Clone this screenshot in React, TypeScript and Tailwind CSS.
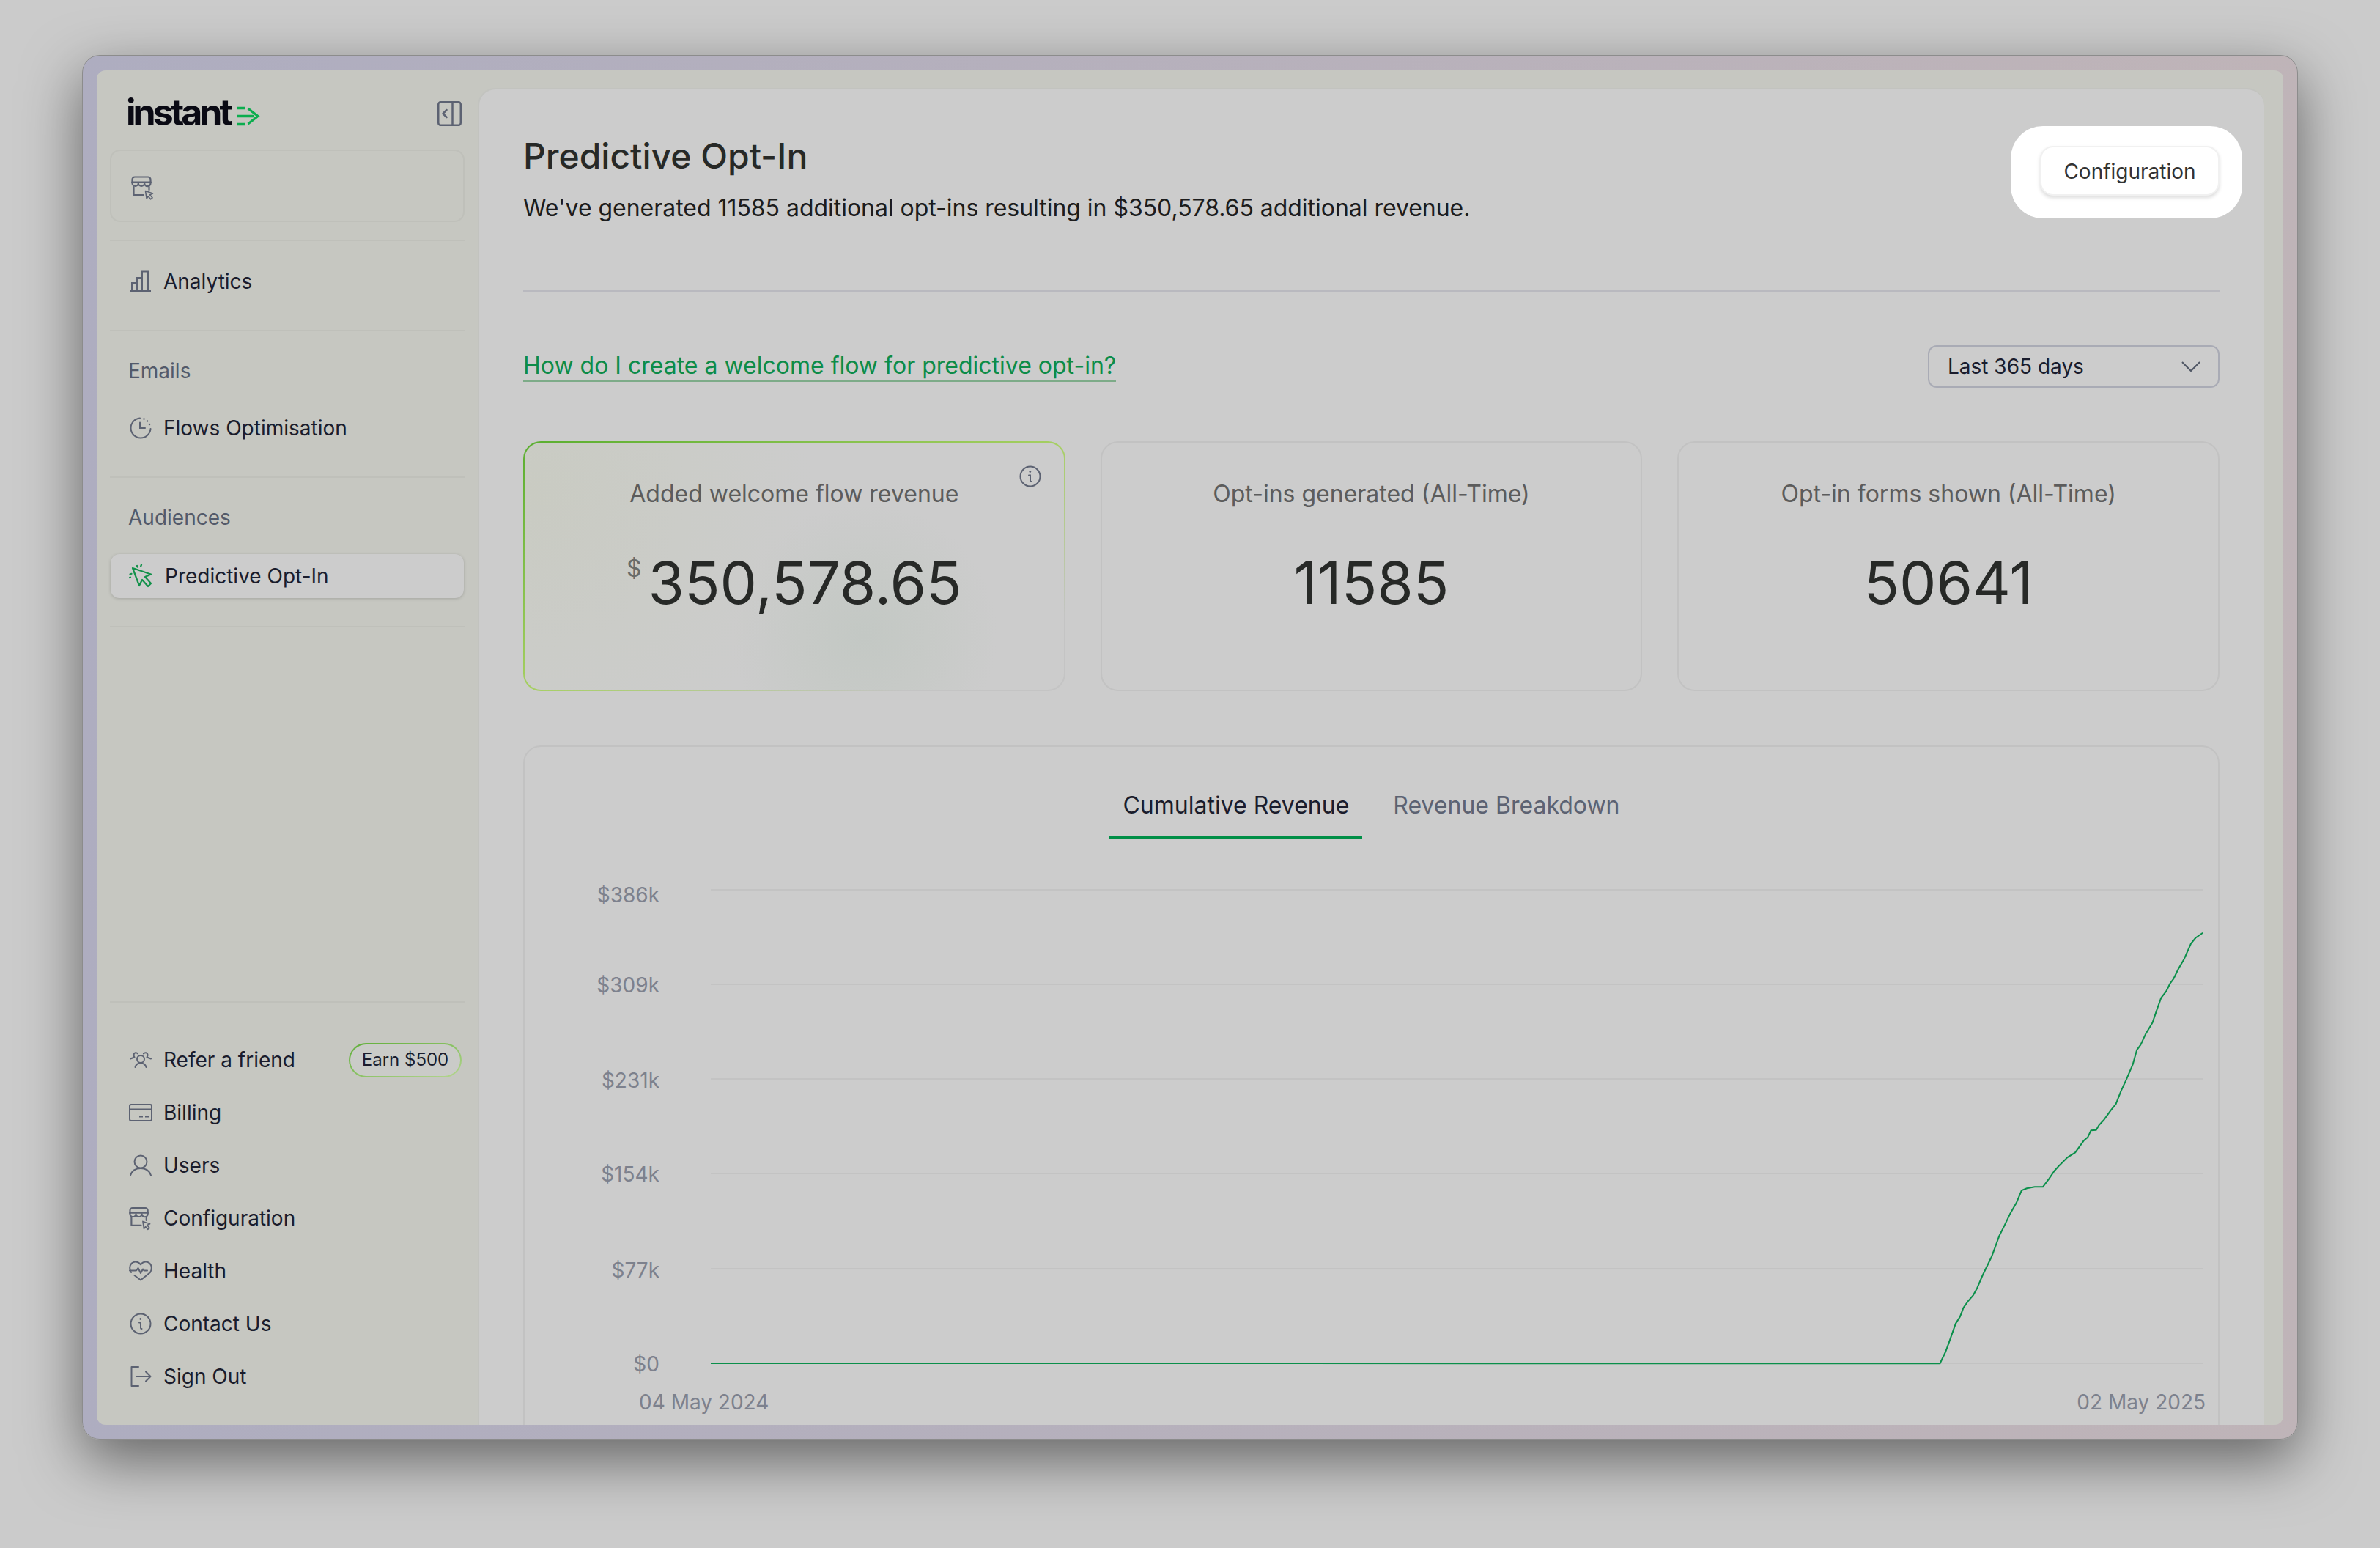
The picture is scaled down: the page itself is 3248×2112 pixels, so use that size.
import React from 'react';

const inter = { fontFamily: 'Inter, "Noto Sans", sans-serif' };

const StoreIcon = () => (
  <svg width="33" height="33" viewBox="0 0 33 33" fill="none" stroke="#5c6272" strokeWidth="2.200" strokeLinecap="round" strokeLinejoin="round">
    <path d="M1.500 9V5A3.500 3.500 0 0 1 5 1.500h18A3.500 3.500 0 0 1 26.500 5V9" />
    <path d="M1.500 8.500h25" />
    <path d="M1.500 8.500V10a4.170 4.170 0 0 0 8.330 0a4.170 4.170 0 0 0 8.330 0a4.170 4.170 0 0 0 8.340 0V8.500" />
    <path d="M3.500 15v11h13.500M24.500 15v4" />
    <path d="M19.500 20.500l10 3.500-4 1.800 3.500 4-2.500 2-3.200-4-2.200 3.200z" strokeWidth="1.600" />
  </svg>
);

const BarsIcon = () => (
  <svg width="30" height="30" viewBox="0 0 30 30" fill="none" stroke="#5c6272" strokeWidth="2">
    <path d="M1 28h28M3 28V17h7v11M10 28V10h7v18M17 28V1.500h8V28" />
  </svg>
);

const ClockIcon = () => (
  <svg width="32" height="32" viewBox="0 0 32 32" fill="none" stroke="#5c6272" strokeWidth="2" strokeLinecap="round">
    <path d="M15 2.500A13.500 13.500 0 1 0 29.500 17" />
    <path d="M15 8.500V16h7" />
    <path d="M20.500 3.500v.1M25 6.500v.1M28 11v.1" strokeWidth="2.500" />
  </svg>
);

const ClickIcon = () => (
  <svg width="32" height="34" viewBox="0 0 32 34" fill="none" stroke="#12914a" strokeWidth="2.200" strokeLinecap="round" strokeLinejoin="round">
    <path d="M5 6l25 8.500-8 3.500 8 9-4 4-8-9-4 8z" />
    <path d="M11 3l.6 1.500M17 1.500l-.8 2M1.500 14.500l2-.7M1 19l1-.4" />
  </svg>
);

const FriendsIcon = () => (
  <svg width="30" height="24" viewBox="0 0 30 24" fill="none" stroke="#5c6272" strokeWidth="2" strokeLinecap="round" strokeLinejoin="round">
    <circle cx="15" cy="11" r="5" />
    <path d="M7.500 22c1-4 4-5.500 7.500-5.500s6.500 1.500 7.500 5.500" />
    <path d="M11 3.500C9.500 1.500 6 1.500 5.500 5c-.2 1.500.5 2.500 1 3.500L1 10.500" />
    <path d="M19 3.500c1.500-2 5-2 5.500 1.500.2 1.500-.5 2.500-1 3.500l5.500 2" />
  </svg>
);

const CardIcon = () => (
  <svg width="32" height="24" viewBox="0 0 32 24" fill="none" stroke="#5c6272" strokeWidth="2">
    <rect x="1" y="1" width="30" height="22" rx="2" />
    <path d="M1 7.500h30M14 17.500h5M22 17.500h5" />
  </svg>
);

const UserIcon = () => (
  <svg width="30" height="30" viewBox="0 0 30 30" fill="none" stroke="#5c6272" strokeWidth="2" strokeLinecap="round">
    <circle cx="15" cy="10" r="8.500" />
    <path d="M1 28.500c2-6 7-9.500 14-9.500s12 3.500 14 9.500" />
  </svg>
);

const HeartIcon = () => (
  <svg width="32" height="28" viewBox="0 0 32 28" fill="none" stroke="#5c6272" strokeWidth="2" strokeLinecap="round" strokeLinejoin="round">
    <path d="M3 16C.5 12.500.5 7 3.500 3.800c3.500-3.500 9-3 12.500 1.500 3.500-4.500 9-5 12.500-1.500 3 3.200 3 8.500.5 12.200L16 26.500 7.500 20" />
    <path d="M1 13.500h9l2.500-3.500 3.500 7 3-5.500 1.500 2H25" />
  </svg>
);

const InfoIcon = ({ size = 30 }: { size?: number }) => (
  <svg width={size} height={size} viewBox="0 0 30 30" fill="none" stroke="#5c6272" strokeWidth="2" strokeLinecap="round">
    <circle cx="15" cy="15" r="13.500" />
    <path d="M13 13.500h2v7c0 1 .5 1.500 1.500 1.500" />
    <path d="M14.800 8.500v.1" strokeWidth="2.800" />
  </svg>
);

const SignOutIcon = () => (
  <svg width="30" height="30" viewBox="0 0 30 30" fill="none" stroke="#5c6272" strokeWidth="2" strokeLinecap="round" strokeLinejoin="round">
    <path d="M12 2H2.500v26H12" />
    <path d="M9 15h19.500M22 8.500l6.500 6.500-6.500 6.500" />
  </svg>
);

const CollapseIcon = () => (
  <svg width="33" height="34" viewBox="0 0 33 34" fill="none" stroke="#5c6272" strokeWidth="2.500" strokeLinecap="round" strokeLinejoin="round">
    <rect x="1.250" y="1.250" width="30.500" height="31.500" rx="3" />
    <path d="M20.500 1.250v31.500M12.500 12l-5 5 5 5" />
  </svg>
);

const LogoArrow = () => (
  <svg width="32" height="27" viewBox="0 0 32 27" fill="none" stroke="#0bad4e" strokeLinejoin="miter">
    <path d="M0 2.500h12M0 13.500h23M0 24.500h12" strokeWidth="3.600" />
    <path d="M15.500 3l13.500 10.500L15.500 24" strokeWidth="3.200" />
  </svg>
);

const NavRow = ({ icon, label }: { icon: React.ReactNode; label: string }) => (
  <div className="flex h-[72px] items-center pl-[26px]">
    <span className="flex w-[32px] shrink-0 items-center justify-center">{icon}</span>
    <span className="ml-[15px] text-[28px] text-[#1a1c2c]">{label}</span>
  </div>
);

const Divider = ({ className }: { className: string }) => <div className={`h-[2px] bg-[#bfc0ba] ${className}`} />;

const Sidebar = () => (
  <aside className="flex w-[520px] shrink-0 flex-col pl-[18px] pr-[18px] pt-[29px]">
    <div className="flex h-[60px] items-center justify-between pl-[22px] pr-[4px]">
      <div className="flex items-center">
        <span className="-mt-[4px] text-[50px] font-bold leading-none tracking-[-0.08em] text-[#0a0a14]">instant</span>
        <span className="ml-[9px] mt-[6px]"><LogoArrow /></span>
      </div>
      <CollapseIcon />
    </div>
    <div className="mt-[19px] flex h-[99px] items-center rounded-[14px] border-2 border-[#bfc0ba] pl-[27px]">
      <span className="mt-[5px]"><StoreIcon /></span>
    </div>
    <Divider className="mt-[24px]" />
    <div className="mt-[19px]">
      <NavRow icon={<BarsIcon />} label="Analytics" />
    </div>
    <Divider className="mt-[30px]" />
    <div className="mt-[36px] h-[36px] pl-[25px] text-[28px] leading-[36px] text-[#535a6a]">Emails</div>
    <div className="mt-[24px]">
      <NavRow icon={<ClockIcon />} label="Flows Optimisation" />
    </div>
    <Divider className="mt-[30px]" />
    <div className="mt-[36px] h-[36px] pl-[25px] text-[28px] leading-[36px] text-[#535a6a]">Audiences</div>
    <div className="ml-[1px] mr-[1px] mt-[32px] flex h-[60px] items-center rounded-[12px] bg-[#cccccc] pl-[25px] shadow-[0_1px_4px_rgba(0,0,0,0.18)]">
      <ClickIcon />
      <span className="ml-[17px] text-[28px] text-[#1a1c2c]">Predictive Opt-In</span>
    </div>
    <Divider className="mt-[38px]" />
    <div className="flex-1" />
    <Divider className="mb-[42px]" />
    <div className="mb-[30px]">
      <div className="flex items-center justify-between pr-[4px]">
        <NavRow icon={<FriendsIcon />} label="Refer a friend" />
        <div className="rounded-full bg-[linear-gradient(to_bottom_right,#5fae38,#b5d690)] p-[2px]">
          <div className="flex h-[43px] w-[150px] items-center justify-center rounded-full bg-[#cacbc8] text-[24px] text-[#1a1c2c]">Earn $500</div>
        </div>
      </div>
      <NavRow icon={<CardIcon />} label="Billing" />
      <NavRow icon={<UserIcon />} label="Users" />
      <NavRow icon={<StoreIcon />} label="Configuration" />
      <NavRow icon={<HeartIcon />} label="Health" />
      <NavRow icon={<InfoIcon />} label="Contact Us" />
      <NavRow icon={<SignOutIcon />} label="Sign Out" />
    </div>
  </aside>
);

const StatCard = ({ title, value }: { title: string; value: string }) => (
  <div className="h-[341px] rounded-[24px] border-2 border-[#c2c2c2] pt-[48px] text-center">
    <div className="text-[32px] leading-[44px] text-[#5c5c5c]">{title}</div>
    <div className="mt-[49px] text-[80px] leading-[100px] text-[#272927]">{value}</div>
  </div>
);

const GRID = [1214, 1343, 1472, 1601, 1731, 1860];
const LABELS: [string, number][] = [['$386k', 1220], ['$309k', 1343], ['$231k', 1473], ['$154k', 1601], ['$77k', 1732], ['$0', 1860]];

// traced from the reference, crop pixels: x = 2500 + px / 2.8, y = 1200 + py / 2.063
const TRACE: [number, number][] = [
  [413, 1362], [435, 1328], [450, 1298], [473, 1250], [490, 1230], [503, 1205], [520, 1187], [540, 1170], [555, 1150],
  [575, 1115], [610, 1062], [640, 1002], [660, 973], [680, 942], [705, 910], [725, 875], [745, 869], [775, 865], [806, 865],
  [830, 842], [850, 820], [870, 804], [900, 782], [930, 768], [962, 735], [978, 725], [990, 706], [1010, 705], [1020, 692],
  [1040, 676], [1065, 650], [1085, 632], [1105, 595], [1125, 563], [1150, 520], [1165, 480], [1180, 465], [1200, 433],
  [1225, 403], [1240, 370], [1258, 333], [1277, 315], [1292, 293], [1305, 280], [1325, 250], [1345, 225], [1372, 180],
  [1390, 164], [1417, 150],
];

const linePath =
  'M970 1860 ' + TRACE.map(([x, y]) => `L${(2500 + x / 2.8).toFixed(1)} ${(1200 + y / 2.063).toFixed(1)}`).join(' ');

const Chart = () => (
  <svg className="block" width="2311" height="800" viewBox="716 1144 2311 800" fill="none" style={inter}>
    {GRID.map((y) => (
      <line key={y} x1="970" x2="3006" y1={y} y2={y} stroke="#c3c3c3" strokeWidth="2" />
    ))}
    {LABELS.map(([label, y]) => (
      <text key={label} x="900" y={y + 11} textAnchor="end" fontSize="28" fill="#7d818d">{label}</text>
    ))}
    <text x="872" y="1923" fontSize="28" fill="#7d818d">04 May 2024</text>
    <text x="3010" y="1923" textAnchor="end" fontSize="28" fill="#7d818d">02 May 2025</text>
    <path d={linePath} stroke="#0a8f4a" strokeWidth="2" strokeLinejoin="round" />
  </svg>
);

const Main = () => (
  <main className="mr-[26px] mt-[24px] min-w-0 flex-1 overflow-hidden rounded-t-[24px] border-l-2 border-t-2 border-[#c2c3bf] bg-[#cccccc] pl-[60px] pr-[61px] pt-[61px]">
    <div className="flex items-start justify-between">
      <div>
        <h1 className="text-[48px] font-medium leading-[60px] text-[#272927]">Predictive Opt-In</h1>
        <p className="mt-[19px] text-[32px] leading-[44px] tracking-[-0.001em] text-[#1c1c1c]">
          We've generated 11585 additional opt-ins resulting in $350,578.65 additional revenue.
        </p>
      </div>
      <div className="relative mt-[16px]">
        <div className="absolute -bottom-[31px] -left-[40px] -right-[31px] -top-[27px] rounded-[44px] bg-white" />
        <button className="relative flex h-[68px] w-[245px] items-center justify-center rounded-[18px] border-2 border-[#f1f1f1] bg-white pt-[2px] text-[28px] text-[#333333] shadow-[0_3px_5px_rgba(0,0,0,0.14)]">
          Configuration
        </button>
      </div>
    </div>
    <div className="mt-[90px] h-[2px] bg-[#b9b9bf]" />
    <div className="mt-[73px] flex h-[58px] items-center justify-between">
      <a className="border-b-2 border-[#7dab88] text-[32px] leading-[40px] text-[#0d8c48]">How do I create a welcome flow for predictive opt-in?</a>
      <div className="flex h-[58px] w-[398px] items-center justify-between rounded-[12px] border-2 border-[#a9abb5] pl-[25px] pr-[24px] text-[28px] text-[#1a1c2c]">
        Last 365 days
        <svg width="26" height="16" viewBox="0 0 26 16" fill="none" stroke="#4f5664" strokeWidth="2"><path d="M1 2l12 12L25 2" /></svg>
      </div>
    </div>
    <div className="mt-[73px] grid grid-cols-3 gap-[48px]">
      <div className="relative h-[341px] rounded-[24px] bg-[linear-gradient(to_bottom_right,#5aae2f_0%,#a6cf62_50%,#c4c4c4_85%)] p-[2px]">
        <div className="h-full rounded-[22px] bg-[radial-gradient(circle_at_0%_20%,#c9cbc2_0%,#cbccc8_28%,transparent_50%),radial-gradient(circle_at_63%_78%,#c3c8c4_0%,#c7cac7_16%,transparent_34%),linear-gradient(#cccccc,#cccccc)] pt-[48px] text-center">
          <div className="text-[32px] leading-[44px] text-[#5c5c5c]">Added welcome flow revenue</div>
          <div className="mt-[49px] flex items-start justify-center text-[#272927]">
            <span className="mr-[9px] mt-[9px] text-[32px] leading-[44px] text-[#696b69]">$</span>
            <span className="text-[80px] leading-[100px]">350,578.65</span>
          </div>
        </div>
        <span className="absolute right-[33px] top-[33px]"><InfoIcon size={30} /></span>
      </div>
      <StatCard title="Opt-ins generated (All-Time)" value="11585" />
      <StatCard title="Opt-in forms shown (All-Time)" value="50641" />
    </div>
    <div className="mt-[74px] rounded-t-[24px] border-2 border-[#c2c2c2] pb-[40px] pt-[58px]">
      <div className="flex justify-center gap-[24px] text-[32px] leading-[44px]">
        <div className="border-b-4 border-[#008f47] px-[18px] pb-[19px] text-[#1a1c2c]">Cumulative Revenue</div>
        <div className="border-b-4 border-transparent px-[18px] pb-[19px] text-[#5c6272]">Revenue Breakdown</div>
      </div>
      <Chart />
    </div>
  </main>
);

export default function App() {
  return (
    <div className="h-[2112px] w-[3248px] overflow-hidden bg-[#cbcbcb] pl-[112px] pt-[75px]" style={inter}>
      <div className="h-[1889px] w-[3024px] rounded-[24px] border border-[#8c8c8c] bg-[linear-gradient(to_right,#aeadc0,#bfb4b8)] px-[19px] py-[20px] shadow-[0_28px_80px_rgba(0,0,0,0.5)]">
        <div className="flex h-[1848px] overflow-hidden rounded-[12px] bg-[#c6c7c1]">
          <Sidebar />
          <Main />
        </div>
      </div>
    </div>
  );
}
